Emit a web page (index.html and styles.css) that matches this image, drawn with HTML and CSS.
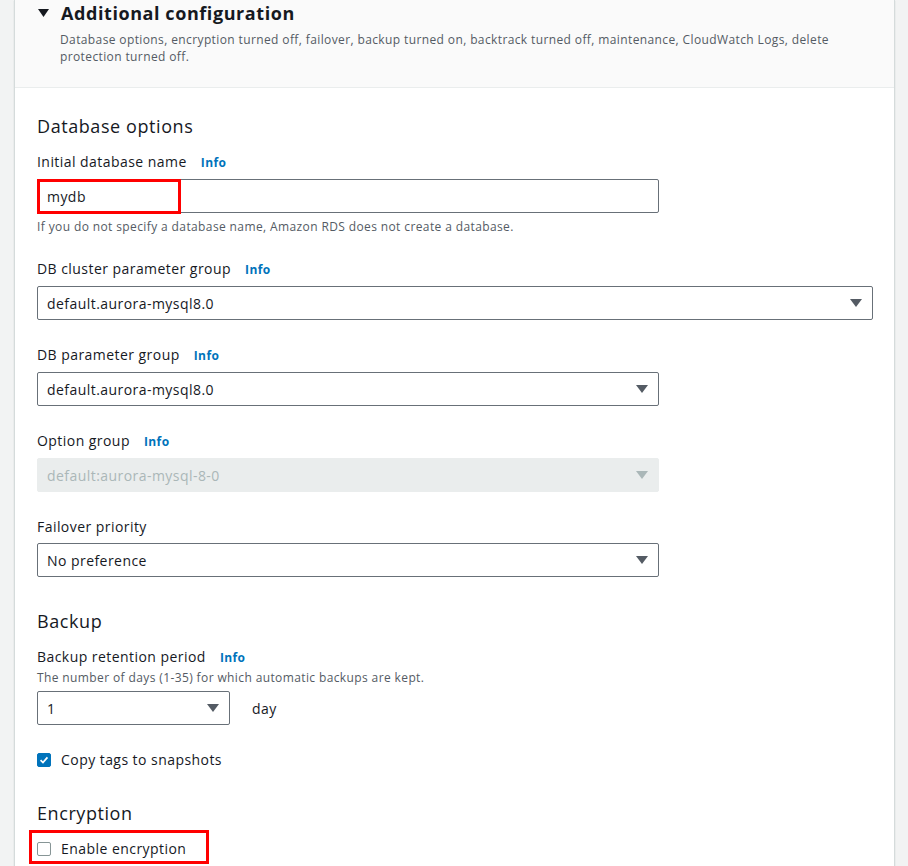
FILE: index.html
```html
<!DOCTYPE html>
<html lang="en">
<head>
    <meta charset="UTF-8">
    <meta name="viewport" content="width=device-width, initial-scale=1.0">
    <title>Additional configuration</title>
    <link rel="stylesheet" href="styles.css">
</head>
<body>

    <div class="panel">
        <!-- Expandable section header -->
        <div class="panel-header">
            <div class="header-title">
                <svg class="caret" width="11" height="8" viewBox="0 0 11 8"><path d="M0 0 H11 L5.5 8 Z" fill="#16191f"/></svg>
                <h2>Additional configuration</h2>
            </div>
            <p class="header-desc">Database options, encryption turned off, failover, backup turned on, backtrack turned off, maintenance, CloudWatch Logs, delete protection turned off.</p>
        </div>

        <div class="panel-body">

            <!-- Database options -->
            <h3 class="section-title">Database options</h3>

            <div class="field">
                <label class="field-label">Initial database name <a class="info">Info</a></label>
                <div class="control half">
                    <input class="text-input" type="text" value="mydb">
                    <span class="highlight hl-input"></span>
                </div>
                <p class="hint">If you do not specify a database name, Amazon RDS does not create a database.</p>
            </div>

            <div class="field">
                <label class="field-label">DB cluster parameter group <a class="info">Info</a></label>
                <div class="select full">
                    <span>default.aurora-mysql8.0</span>
                    <svg class="arrow" width="12" height="8" viewBox="0 0 12 8"><path d="M0 0 H12 L6 8 Z"/></svg>
                </div>
            </div>

            <div class="field">
                <label class="field-label">DB parameter group <a class="info">Info</a></label>
                <div class="select half">
                    <span>default.aurora-mysql8.0</span>
                    <svg class="arrow" width="12" height="8" viewBox="0 0 12 8"><path d="M0 0 H12 L6 8 Z"/></svg>
                </div>
            </div>

            <div class="field">
                <label class="field-label">Option group <a class="info">Info</a></label>
                <div class="select half disabled">
                    <span>default:aurora-mysql-8-0</span>
                    <svg class="arrow" width="12" height="8" viewBox="0 0 12 8"><path d="M0 0 H12 L6 8 Z"/></svg>
                </div>
            </div>

            <div class="field">
                <label class="field-label">Failover priority</label>
                <div class="select half">
                    <span>No preference</span>
                    <svg class="arrow" width="12" height="8" viewBox="0 0 12 8"><path d="M0 0 H12 L6 8 Z"/></svg>
                </div>
            </div>

            <!-- Backup -->
            <h3 class="section-title spaced">Backup</h3>

            <div class="field">
                <label class="field-label">Backup retention period <a class="info">Info</a></label>
                <p class="desc">The number of days (1-35) for which automatic backups are kept.</p>
                <div class="inline-row">
                    <div class="select small">
                        <span>1</span>
                        <svg class="arrow" width="12" height="8" viewBox="0 0 12 8"><path d="M0 0 H12 L6 8 Z"/></svg>
                    </div>
                    <span class="unit">day</span>
                </div>
            </div>

            <div class="check-row">
                <span class="checkbox checked">
                    <svg width="14" height="14" viewBox="0 0 14 14"><path d="M3 7.2 L5.8 10 L11 4" fill="none" stroke="#fff" stroke-width="2"/></svg>
                </span>
                <span>Copy tags to snapshots</span>
            </div>

            <!-- Encryption -->
            <h3 class="section-title after-check">Encryption</h3>

            <div class="check-row">
                <span class="checkbox"></span>
                <span>Enable encryption</span>
                <span class="highlight hl-check"></span>
            </div>

        </div>
    </div>

</body>
</html>
```

FILE: styles.css
```css
* {
    letter-spacing: 0.032em;
}
body {
    margin: 0;
    padding: 0 13px 0 14px;
    background-color: #f2f3f3;
    font-family: "Open Sans", "Noto Sans", Arial, sans-serif;
    color: #16191f;
    font-size: 14px;
}
.panel {
    background-color: #fff;
    border-left: 1px solid #d5dbdb;
    border-right: 1px solid #d5dbdb;
    box-shadow: 0 1px 1px rgba(0, 28, 36, 0.2);
    min-height: 866px;
}
.panel-header {
    background-color: #fafafa;
    border-bottom: 1px solid #eaeded;
    padding: 1px 22px 22px 22px;
}
.header-title {
    display: flex;
    align-items: center;
    gap: 12px;
}
.caret {
    margin-left: 1px;
}
.header-title h2 {
    margin: 0;
    font-size: 18px;
    line-height: 24px;
    font-weight: 700;
}
.header-desc {
    margin: 6px 0 0 23px;
    font-size: 12px;
    line-height: 17px;
    color: #545b64;
    max-width: 800px;
}
.panel-body {
    padding: 26px 22px 0 22px;
}
.section-title {
    margin: 0 0 13px 0;
    font-size: 18px;
    line-height: 24px;
    font-weight: 400;
}
.section-title.spaced {
    margin-top: 32px;
}
.section-title.after-check {
    margin-top: 30px;
}
.field {
    margin-bottom: 24px;
}
.field-label {
    display: block;
    line-height: 20px;
    padding-top: 1px;
    margin-bottom: 6px;
}
.info {
    margin-left: 10px;
    font-size: 12px;
    font-weight: 700;
    color: #0073bb;
}
.desc {
    margin: -4px 0 5px 0;
    font-size: 12px;
    line-height: 16px;
    color: #545b64;
}
.hint {
    margin: 6px 0 -1px 0;
    font-size: 12px;
    line-height: 16px;
    color: #545b64;
}
.control {
    position: relative;
}
.half {
    width: 622px;
}
.full {
    width: 836px;
}
.small {
    width: 193px;
}
.text-input {
    box-sizing: border-box;
    display: block;
    width: 100%;
    height: 34px;
    border: 1px solid #687078;
    border-radius: 2px;
    padding: 0 9px;
    font-family: inherit;
    font-size: 14px;
    color: #16191f;
    outline: none;
}
.select {
    box-sizing: border-box;
    height: 34px;
    border: 1px solid #687078;
    border-radius: 2px;
    padding: 0 9px;
    display: flex;
    align-items: center;
    justify-content: space-between;
    background-color: #fff;
}
.select .arrow {
    fill: #545b64;
    margin-right: 1px;
}
.select.disabled {
    background-color: #eaeded;
    border-color: #eaeded;
    color: #aab7b8;
}
.select.disabled .arrow {
    fill: #aab7b8;
}
.inline-row {
    display: flex;
    align-items: center;
    gap: 22px;
}
.check-row {
    display: flex;
    align-items: center;
    gap: 10px;
    line-height: 22px;
    position: relative;
    width: max-content;
}
.checkbox {
    box-sizing: border-box;
    width: 14px;
    height: 14px;
    border: 1px solid #879596;
    border-radius: 2px;
    display: flex;
    align-items: center;
    justify-content: center;
}
.checkbox.checked {
    background-color: #0073bb;
    border-color: #0073bb;
}
.checkbox svg {
    display: block;
}
/* red annotation boxes */
.highlight {
    position: absolute;
    box-sizing: border-box;
    border: 3px solid #ff0000;
    pointer-events: none;
}
.hl-input {
    left: 0;
    top: 0;
    width: 144px;
    height: 35px;
}
.hl-check {
    left: -8px;
    top: -8px;
    width: 180px;
    height: 34px;
}
```
